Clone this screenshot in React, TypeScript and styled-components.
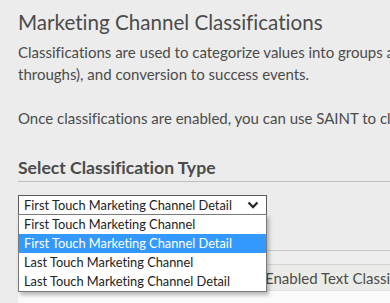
import React from "react";
import styled, { createGlobalStyle } from "styled-components";

const GlobalStyle = createGlobalStyle`
  html, body {
    margin: 0;
    padding: 0;
    background: #ececec;
    overflow: hidden;
  }
  body {
    font-family: Lato, "Open Sans", sans-serif;
    font-variant-ligatures: none;
    color: #4b4b4b;
  }
`;

const Page = styled.div`
  padding: 9px 0 0 18px;
  width: 900px;
`;

const Title = styled.h1`
  margin: 0;
  font-size: 20.6px;
  line-height: 26px;
  font-weight: 400;
  color: #4b4b4b;
  white-space: nowrap;
`;

const Paragraph = styled.p<{ $gap?: number }>`
  margin: ${(p) => p.$gap ?? 0}px 0 0;
  font-size: 15px;
  line-height: 22px;
  color: #4b4b4b;
  white-space: nowrap;
`;

const SectionHeading = styled.h2`
  margin: 28px 0 0;
  padding-bottom: 2px;
  border-bottom: 1px solid #bfbfbf;
  font-size: 17.6px;
  line-height: 22px;
  font-weight: 700;
  color: #4b4b4b;
`;

const SelectWrap = styled.div`
  position: relative;
  margin-top: 13px;
  width: 249px;
  z-index: 2;
`;

const SelectBox = styled.div`
  box-sizing: border-box;
  height: 20px;
  border: 1px solid #5a5a5a;
  background: #ffffff;
  display: flex;
  align-items: center;
  justify-content: space-between;
  padding: 0 5px 0 5px;
  font-size: 12.8px;
  color: #222;
`;

const Chevron = styled.svg`
  width: 12px;
  height: 8px;
  display: block;
  margin-right: 2px;
`;

const List = styled.ul`
  position: absolute;
  top: 19px;
  left: 0;
  width: 249px;
  box-sizing: border-box;
  margin: 0;
  padding: 0;
  list-style: none;
  background: #ffffff;
  border: 1px solid #7a7a7a;
  box-shadow: 2px 3px 4px rgba(0, 0, 0, 0.28);
`;

const Option = styled.li<{ $active?: boolean }>`
  height: 19px;
  line-height: 19px;
  padding-left: 5px;
  font-size: 12.8px;
  color: ${(p) => (p.$active ? "#ffffff" : "#222222")};
  background: ${(p) => (p.$active ? "#3399ff" : "transparent")};
  white-space: nowrap;
`;

const Table = styled.div`
  margin-top: 35px;
  border-top: 1px solid #c9c9c9;
`;

const Band = styled.div`
  height: 13px;
  background: #eeeeee;
  border-bottom: 1px solid #d2d2d2;
`;

const HeaderRow = styled.div`
  height: 25px;
  display: flex;
  align-items: center;
  background: #ebebe7;
  border-bottom: 1px solid #e2e2e2;
  padding-left: 247px;
  font-size: 15px;
  color: #4b4b4b;
  white-space: nowrap;
`;

const Body = styled.div`
  height: 60px;
  background: #fafafa;
`;

const options = [
  "First Touch Marketing Channel",
  "First Touch Marketing Channel Detail",
  "Last Touch Marketing Channel",
  "Last Touch Marketing Channel Detail",
];

export default function App() {
  return (
    <>
      <GlobalStyle />
      <Page>
        <Title>Marketing Channel Classifications</Title>
        <Paragraph $gap={6}>
          Classifications are used to categorize values into groups and report on them (such as marketing channel click-
          <br />
          throughs), and conversion to success events.
        </Paragraph>
        <Paragraph $gap={22}>
          Once classifications are enabled, you can use SAINT to classify marketing channel values.
        </Paragraph>
        <SectionHeading>Select Classification Type</SectionHeading>
        <SelectWrap>
          <SelectBox>
            <span>First Touch Marketing Channel Detail</span>
            <Chevron viewBox="0 0 12 8">
              <path d="M1.5 1.5 L6 6 L10.5 1.5" fill="none" stroke="#2a2a2a" strokeWidth="2.3" />
            </Chevron>
          </SelectBox>
          <List>
            {options.map((o, i) => (
              <Option key={o} $active={i === 1}>
                {o}
              </Option>
            ))}
          </List>
        </SelectWrap>
        <Table>
          <Band />
          <HeaderRow>Enabled Text Classifications</HeaderRow>
          <Body />
        </Table>
      </Page>
    </>
  );
}
